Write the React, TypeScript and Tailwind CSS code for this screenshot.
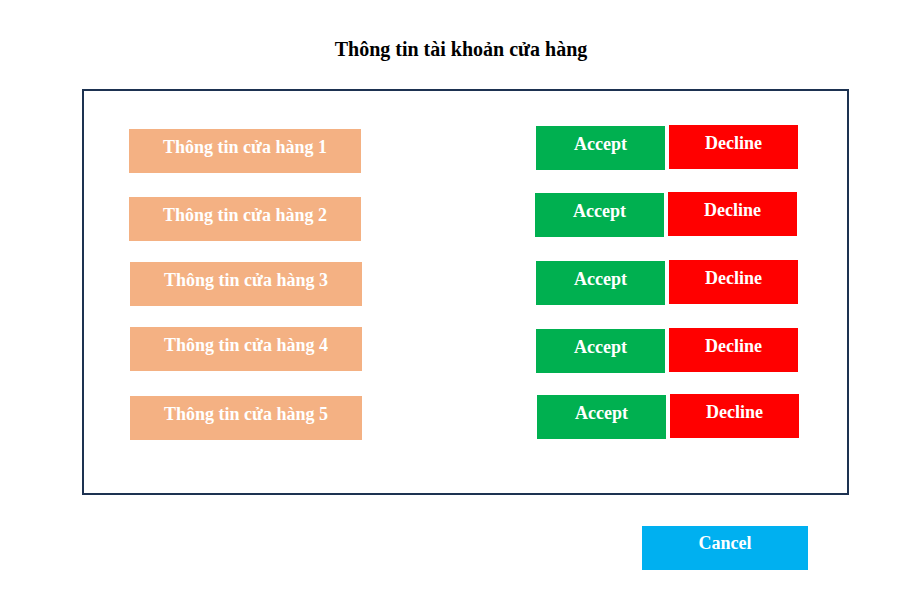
const rows = [
  { label: "Thông tin cửa hàng 1", row: "h-[67px]", shop: "ml-[45px] mt-[4px]", accept: "ml-[175px] mt-[1px]", decline: "mt-0" },
  { label: "Thông tin cửa hàng 2", row: "h-[68px]", shop: "ml-[45px] mt-[5px]", accept: "ml-[174px] mt-[1px]", decline: "mt-0" },
  { label: "Thông tin cửa hàng 3", row: "h-[67px]", shop: "ml-[46px] mt-[2px]", accept: "ml-[174px] mt-[1px]", decline: "mt-0" },
  { label: "Thông tin cửa hàng 4", row: "h-[67px]", shop: "ml-[46px] mt-0", accept: "ml-[174px] mt-[2px]", decline: "mt-[1px]" },
  { label: "Thông tin cửa hàng 5", row: "h-[67px]", shop: "ml-[46px] mt-[2px]", accept: "ml-[175px] mt-[1px]", decline: "mt-0" },
];

const App = () => {
  return (
    <div
      className="w-[912px] h-[615px] bg-white text-black"
      style={{ fontFamily: "'Liberation Serif', 'Times New Roman', serif" }}
    >
      {/* Title */}
      <h1 className="pt-[38px] pl-[10px] text-center text-[20px] font-bold leading-[22px]">
        Thông tin tài khoản cửa hàng
      </h1>

      {/* Frame */}
      <div className="ml-[82px] mt-[29px] w-[767px] h-[406px] border-2 border-[#1d3251] pt-[34px]">
        {rows.map((r) => (
          <div key={r.label} className={`${r.row} flex items-start`}>
            <div
              className={`${r.shop} w-[232px] h-[44px] bg-[#f4b183] pt-[8px] text-center text-[18px] font-bold leading-[20px] text-white`}
            >
              {r.label}
            </div>
            <div
              className={`${r.accept} w-[129px] h-[44px] bg-[#00b050] pt-[8px] text-center text-[18px] font-bold leading-[20px] text-white`}
            >
              Accept
            </div>
            <div
              className={`${r.decline} ml-[4px] w-[129px] h-[44px] bg-[#ff0000] pt-[8px] text-center text-[18px] font-bold leading-[20px] text-white`}
            >
              Decline
            </div>
          </div>
        ))}
      </div>

      {/* Cancel */}
      <div className="flex pl-[642px] mt-[31px]">
        <div className="w-[166px] h-[44px] bg-[#00b0f0] pt-[7px] text-center text-[18px] font-bold leading-[20px] text-white">
          Cancel
        </div>
      </div>
    </div>
  );
};

export default App;
